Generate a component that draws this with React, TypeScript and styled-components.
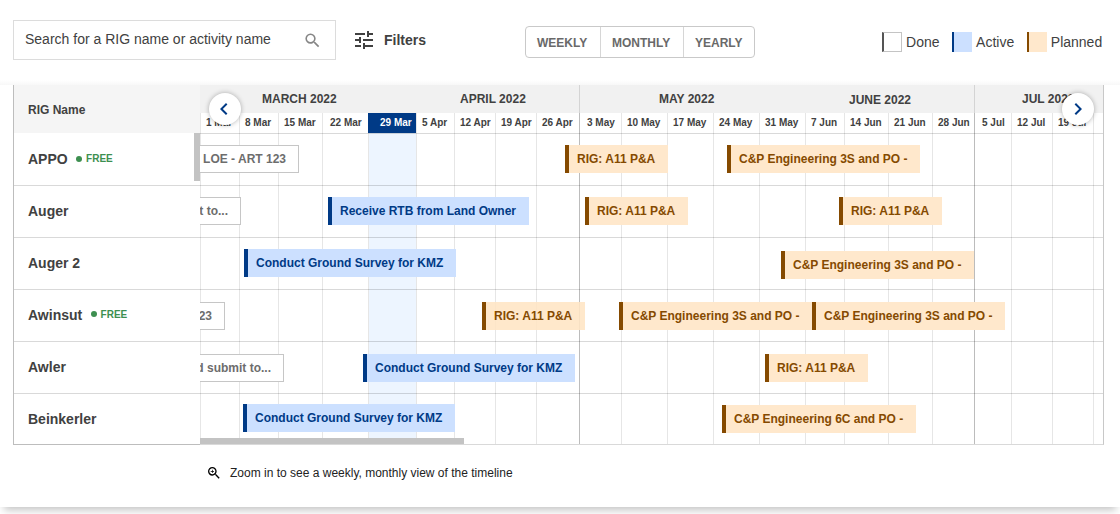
import React from "react";
import styled, { createGlobalStyle, css } from "styled-components";
import {
  MdSearch,
  MdTune,
  MdChevronLeft,
  MdChevronRight,
  MdZoomIn,
} from "react-icons/md";

const GlobalStyle = createGlobalStyle`
  * { box-sizing: border-box; }
  body {
    margin: 0;
    background: #fff;
    color: #414141;
    font-family: "Liberation Sans", Arial, sans-serif;
  }
`;

type Kind = "done" | "active" | "planned";

interface Task {
  kind: Kind;
  label: string;
  start: number;
  end: number;
  top: number;
  faded?: boolean;
}

interface Rig {
  name: string;
  free?: boolean;
  tasks: Task[];
}

interface Week {
  label: string;
  width: number;
  inset?: number;
  monthStart?: boolean;
  current?: boolean;
}

const palette = {
  done: { bg: "#ffffff", accent: "#555555", text: "#6d6d6d" },
  active: { bg: "#cce0ff", accent: "#003a86", text: "#003a86" },
  planned: { bg: "#ffe8cc", accent: "#854a00", text: "#854a00" },
};

const months = [
  { label: "MARCH 2022", width: 216, inset: 62 },
  { label: "APRIL 2022", width: 163, inset: 44 },
  { label: "MAY 2022", width: 226, inset: 79, divider: true },
  { label: "JUNE 2022", width: 169, inset: 44, drop: 2 },
  { label: "JUL 2022", width: 129, inset: 47, divider: true },
];

const weeks: Week[] = [
  { label: "1 Mar", width: 39 },
  { label: "8 Mar", width: 39 },
  { label: "15 Mar", width: 44 },
  { label: "22 Mar", width: 46, inset: 7 },
  { label: "29 Mar", width: 48, inset: 11, current: true },
  { label: "5 Apr", width: 38 },
  { label: "12 Apr", width: 41 },
  { label: "19 Apr", width: 41 },
  { label: "26 Apr", width: 43 },
  { label: "3 May", width: 42, inset: 7, monthStart: true },
  { label: "10 May", width: 46 },
  { label: "17 May", width: 46 },
  { label: "24 May", width: 46 },
  { label: "31 May", width: 46 },
  { label: "7 Jun", width: 39 },
  { label: "14 Jun", width: 44 },
  { label: "21 Jun", width: 44 },
  { label: "28 Jun", width: 42 },
  { label: "5 Jul", width: 37, inset: 7, monthStart: true },
  { label: "12 Jul", width: 41 },
  { label: "19 Jul", width: 41 },
  { label: "", width: 10 },
];

const rigs: Rig[] = [
  {
    name: "APPO",
    free: true,
    tasks: [
      { kind: "done", label: "LOE - ART 123", start: 0, end: 99, top: 11 },
      { kind: "planned", label: "RIG: A11 P&A", start: 365, end: 468, top: 11 },
      { kind: "planned", label: "C&P Engineering 3S and PO -", start: 527, end: 720, top: 11 },
    ],
  },
  {
    name: "Auger",
    tasks: [
      { kind: "done", label: "t to...", start: 0, end: 41, top: 11 },
      { kind: "active", label: "Receive RTB from Land Owner", start: 128, end: 329, top: 11 },
      { kind: "planned", label: "RIG: A11 P&A", start: 385, end: 488, top: 11 },
      { kind: "planned", label: "RIG: A11 P&A", start: 639, end: 742, top: 11 },
    ],
  },
  {
    name: "Auger 2",
    tasks: [
      { kind: "active", label: "Conduct Ground Survey for KMZ", start: 44, end: 256, top: 11 },
      { kind: "planned", label: "C&P Engineering 3S and PO -", start: 581, end: 774, top: 13 },
    ],
  },
  {
    name: "Awinsut",
    free: true,
    tasks: [
      { kind: "done", label: "23", start: 0, end: 25, top: 12 },
      { kind: "planned", label: "RIG: A11 P&A", start: 282, end: 385, top: 12, faded: true },
      { kind: "planned", label: "C&P Engineering 3S and PO -", start: 419, end: 612, top: 12 },
      { kind: "planned", label: "C&P Engineering 3S and PO -", start: 612, end: 805, top: 12 },
    ],
  },
  {
    name: "Awler",
    tasks: [
      { kind: "done", label: "d submit to...", start: 0, end: 84, top: 12 },
      { kind: "active", label: "Conduct Ground Survey for KMZ", start: 163, end: 375, top: 12 },
      { kind: "planned", label: "RIG: A11 P&A", start: 565, end: 668, top: 12 },
    ],
  },
  {
    name: "Beinkerler",
    tasks: [
      { kind: "active", label: "Conduct Ground Survey for KMZ", start: 43, end: 255, top: 10 },
      { kind: "planned", label: "C&P Engineering 6C and PO -", start: 522, end: 716, top: 11 },
    ],
  },
];

const Page = styled.div`
  height: 514px;
  overflow: hidden;
`;

const Card = styled.main`
  height: 507px;
  background: #fff;
  box-shadow: 0 7px 8px -4px rgba(0, 0, 0, 0.24);
`;

const Toolbar = styled.header`
  display: flex;
  align-items: flex-start;
  height: 85px;
  padding: 20px 0 0 13px;
  background: linear-gradient(#fff 80px, #f8f8f8 85px);
`;

const SearchBox = styled.div`
  display: flex;
  align-items: center;
  justify-content: space-between;
  width: 323px;
  height: 40px;
  padding: 0 13px 0 11px;
  border: 1px solid #dcdcdc;
  font-size: 14px;
  line-height: 16px;

  span { margin-top: -2px; }
  svg { color: #868686; }
`;

const FilterButton = styled.button`
  display: flex;
  align-items: center;
  gap: 8px;
  height: 40px;
  margin-left: 16px;
  padding: 0;
  border: 0;
  background: none;
  color: #414141;
  font: bold 14px/16px "Liberation Sans", Arial, sans-serif;
`;

const ScaleSwitch = styled.div`
  display: flex;
  width: 230px;
  height: 32px;
  margin: 6px 0 0 99px;
  border: 1px solid #c9c9c9;
  border-radius: 4px;
`;

const ScaleOption = styled.button<{ $width: number }>`
  width: ${(p) => p.$width}px;
  padding: 2px 0 0 11px;
  border: 0;
  background: none;
  color: #696969;
  font: bold 12px/14px "Liberation Sans", Arial, sans-serif;
  text-align: left;

  & + & { border-left: 1px solid #d6d6d6; }
`;

const Legend = styled.ul`
  display: flex;
  gap: 12.6px;
  margin: 12px 0 0 127px;
  padding: 0;
  list-style: none;
`;

const LegendItem = styled.li`
  display: flex;
  align-items: center;
  gap: 4px;
  height: 20px;
  font-size: 14px;
  line-height: 16px;
`;

const Swatch = styled.i<{ $kind: Kind }>`
  width: 20px;
  height: 20px;
  background: ${(p) => palette[p.$kind].bg};
  ${(p) => p.$kind === "done" && css`border: 1px solid #c4c4c4;`}
  border-left: 2px solid ${(p) => palette[p.$kind].accent};
`;

const Board = styled.section`
  display: flex;
  width: 1091px;
  height: 360px;
  margin-left: 13px;
`;

const RigColumn = styled.div`
  position: relative;
  width: 187px;
  border-left: 1px solid #bdbdbd;
  border-bottom: 1px solid #bdbdbd;
`;

const RigHeading = styled.div`
  height: 48px;
  padding: 18px 0 0 14px;
  background: #f5f5f5;
  font-size: 12px;
  font-weight: bold;
  line-height: 14px;
`;

const RigCell = styled.div`
  display: flex;
  align-items: center;
  gap: 8px;
  height: 52px;
  padding-left: 14px;
  font-size: 14px;
  font-weight: bold;

  & + & {
    padding-bottom: 2px;
    border-top: 1px solid #d9d9d9;
  }
`;

const FreeTag = styled.span`
  display: flex;
  align-items: center;
  gap: 4px;
  margin: -1px 0 0 0.4px;
  color: #3d8f50;
  font-size: 10px;

  &::before {
    content: "";
    width: 6px;
    height: 6px;
    border-radius: 50%;
    background: currentColor;
  }
`;

const VerticalThumb = styled.div`
  position: absolute;
  top: 48px;
  right: 0;
  width: 6px;
  height: 48px;
  background: #c3c3c3;
`;

const Timeline = styled.div`
  position: relative;
  display: flex;
  flex-direction: column;
  width: 904px;
  border-right: 1px solid #c8c8c8;
  border-bottom: 1px solid #d9d9d9;
`;

const MonthRow = styled.div`
  display: flex;
  height: 28px;
  background: #f1f1f1;
`;

const MonthCell = styled.div<{ $width: number; $inset: number; $drop: number; $divider?: boolean }>`
  flex: none;
  width: ${(p) => p.$width}px;
  padding: ${(p) => 7 + p.$drop / 2}px 0 0 ${(p) => p.$inset}px;
  ${(p) => p.$divider && css`border-left: 1px solid #d4d4d4;`}
  font-size: 12px;
  font-weight: bold;
  line-height: 14px;
  white-space: nowrap;
`;

const WeekRow = styled.div`
  display: flex;
  height: 20px;
`;

const lineColor = (strong?: boolean) => (strong ? "#bcbcbc" : "#e6e6e6");

const WeekCell = styled.div<{ $width: number; $inset: number; $strong?: boolean; $current?: boolean }>`
  flex: none;
  width: ${(p) => p.$width}px;
  padding-left: ${(p) => p.$inset}px;
  border-left: 1px solid ${(p) => lineColor(p.$strong)};
  font-size: 10px;
  font-weight: bold;
  line-height: 20px;
  white-space: nowrap;
  ${(p) =>
    p.$current &&
    css`
      border-left-color: #003a86;
      background: #003a86;
      color: #fff;
    `}
`;

const Body = styled.div`
  display: grid;
  flex: 1;
  overflow: hidden;
`;

const Columns = styled.div`
  grid-area: 1 / 1;
  display: flex;
`;

const Column = styled.div<{ $width: number; $strong?: boolean; $current?: boolean }>`
  flex: none;
  width: ${(p) => p.$width}px;
  border-left: 1px solid ${(p) => lineColor(p.$strong)};
  background: ${(p) => (p.$current ? "#edf5ff" : "transparent")};
`;

const Tracks = styled.div`
  grid-area: 1 / 1;
`;

const Track = styled.div`
  display: flex;
  align-items: flex-start;
  height: 52px;
  border-top: 1px solid rgba(0, 0, 0, 0.15);
`;

const TaskBar = styled.div<{ $kind: Kind; $gap: number; $width: number; $top: number; $faded?: boolean }>`
  display: flex;
  flex: none;
  align-items: center;
  width: ${(p) => p.$width}px;
  height: 28px;
  margin: ${(p) => p.$top}px 0 0 ${(p) => p.$gap}px;
  color: ${(p) => palette[p.$kind].text};
  font-size: 12px;
  font-weight: bold;
  white-space: nowrap;
  ${(p) =>
    p.$kind === "done"
      ? css`
          justify-content: flex-end;
          overflow: hidden;
          padding-right: 12px;
          border: 1px solid #c6c6c6;
          border-left: 0;
          background: #fff;
        `
      : css`
          padding-left: 8px;
          border-left: 4px solid ${palette[p.$kind].accent};
          background: ${palette[p.$kind].bg};
          ${p.$faded && css`
            background: rgba(255, 229, 196, 0.88);
          `}
        `}
`;

const HorizontalThumb = styled.div`
  position: absolute;
  left: 0;
  bottom: 0;
  width: 264px;
  height: 6px;
  background: #c3c3c3;
`;

const ScrollButton = styled.button<{ $left: number }>`
  position: absolute;
  top: 8px;
  left: ${(p) => p.$left}px;
  display: flex;
  align-items: center;
  justify-content: center;
  width: 32px;
  height: 32px;
  padding: 0;
  border: 0;
  border-radius: 50%;
  background: #fff;
  box-shadow: 0 0 5px rgba(0, 0, 0, 0.3);
  color: #003a86;
`;

const EarlierButton = styled(ScrollButton)`
  padding-right: 2px;
`;

const Hint = styled.footer`
  display: flex;
  align-items: center;
  gap: 8px;
  padding: 19px 0 0 206px;
  color: #222;
  font-size: 12px;
  line-height: 18px;

  svg { color: #000; }
`;

function RigTrack({ tasks }: { tasks: Task[] }) {
  return (
    <Track>
      {tasks.map((task, i) => (
        <TaskBar
          key={task.start}
          $kind={task.kind}
          $gap={task.start - (i ? tasks[i - 1].end : 0)}
          $width={task.end - task.start}
          $top={task.top}
          $faded={task.faded}
        >
          {task.label}
        </TaskBar>
      ))}
    </Track>
  );
}

export default function App() {
  return (
    <Page>
      <GlobalStyle />
      <Card>
        <Toolbar>
          <SearchBox>
            <span>Search for a RIG name or activity name</span>
            <MdSearch size={19} />
          </SearchBox>
          <FilterButton>
            <MdTune size={24} />
            Filters
          </FilterButton>
          <ScaleSwitch>
            <ScaleOption $width={74}>WEEKLY</ScaleOption>
            <ScaleOption $width={83}>MONTHLY</ScaleOption>
            <ScaleOption $width={71}>YEARLY</ScaleOption>
          </ScaleSwitch>
          <Legend>
            <LegendItem><Swatch $kind="done" />Done</LegendItem>
            <LegendItem><Swatch $kind="active" />Active</LegendItem>
            <LegendItem><Swatch $kind="planned" />Planned</LegendItem>
          </Legend>
        </Toolbar>
        <Board>
          <RigColumn>
            <RigHeading>RIG Name</RigHeading>
            {rigs.map((rig) => (
              <RigCell key={rig.name}>
                {rig.name}
                {rig.free && <FreeTag>FREE</FreeTag>}
              </RigCell>
            ))}
            <VerticalThumb />
          </RigColumn>
          <Timeline>
            <MonthRow>
              {months.map((m) => (
                <MonthCell key={m.label} $width={m.width} $inset={m.inset} $drop={m.drop ?? 0} $divider={m.divider}>
                  {m.label}
                </MonthCell>
              ))}
            </MonthRow>
            <WeekRow>
              {weeks.map((w) => (
                <WeekCell key={w.label} $width={w.width} $inset={w.inset ?? 5} $strong={w.monthStart} $current={w.current}>
                  {w.label}
                </WeekCell>
              ))}
            </WeekRow>
            <Body>
              <Columns>
                {weeks.map((w) => (
                  <Column key={w.label} $width={w.width} $strong={w.monthStart} $current={w.current} />
                ))}
              </Columns>
              <Tracks>
                {rigs.map((rig) => (
                  <RigTrack key={rig.name} tasks={rig.tasks} />
                ))}
              </Tracks>
            </Body>
            <HorizontalThumb />
            <EarlierButton $left={9} aria-label="Earlier"><MdChevronLeft size={24} /></EarlierButton>
            <ScrollButton $left={862} aria-label="Later"><MdChevronRight size={24} /></ScrollButton>
          </Timeline>
        </Board>
        <Hint>
          <MdZoomIn size={16} />
          Zoom in to see a weekly, monthly view of the timeline
        </Hint>
      </Card>
    </Page>
  );
}
